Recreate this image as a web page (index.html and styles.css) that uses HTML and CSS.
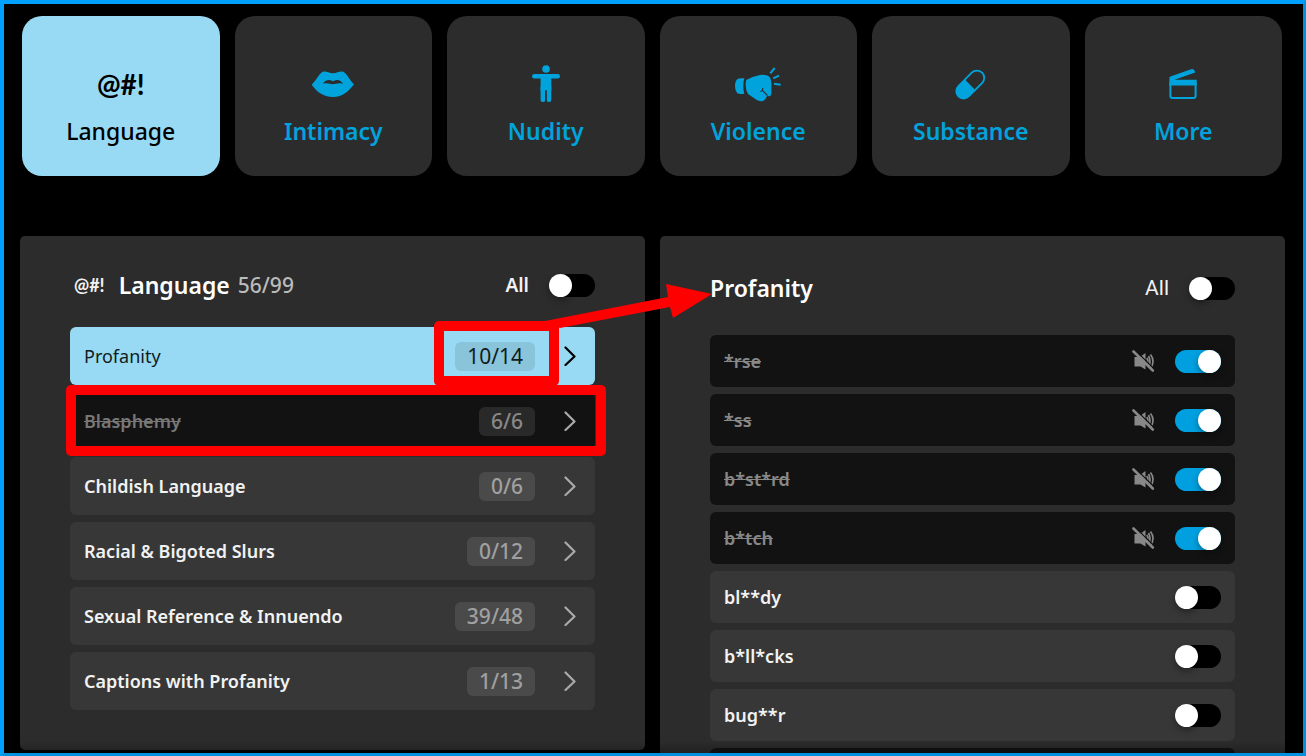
FILE: index.html
```html
<!DOCTYPE html>
<html lang="en">
<head>
<meta charset="utf-8">
<meta name="viewport" content="width=device-width, initial-scale=1">
<title>Language filters</title>
<link rel="stylesheet" href="styles.css">
</head>
<body>
<svg class="defs" aria-hidden="true">
  <symbol id="chevron" viewBox="0 0 12 20"><path d="M1.500 1.500L10.500 10.500L1.500 19" fill="none" stroke="currentColor" stroke-width="2.200" stroke-linecap="round" stroke-linejoin="round"/></symbol>
  <symbol id="mute" viewBox="0 0 24 24">
    <path d="M2.500 8H8L13.500 4V20.500L8.500 17.500H2.500Z" fill="currentColor"/>
    <path d="M14.800 9Q17 12.500 14.800 16.500M16.500 7Q19.500 12.500 16.500 18.500M18.500 5.500Q23.500 12 18.500 20" fill="none" stroke="currentColor" stroke-width="1.700"/>
    <path d="M3 1.200L23 20.700" stroke="#121212" stroke-width="1.200"/>
    <path d="M1.500 2.500L20.800 21.500" stroke="currentColor" stroke-width="2.600" stroke-linecap="round"/>
  </symbol>
</svg>
<main class="frame">
  <nav class="tiles" aria-label="Filter categories">
    <button class="tile tile-active" type="button"><span class="tile-icon symbols">@#!</span><span class="tile-label">Language</span></button>
    <button class="tile" type="button">
      <span class="tile-icon"><svg width="44" height="27" viewBox="0 0 44 27" aria-hidden="true"><path fill="currentColor" fill-rule="evenodd" d="M.7 13.700C5 10 9 1 12.500.6C15.500 0 18 2.200 22 2.200S28.500 0 31.500.6C35 1 39 10 43 13.300C38 20 32 26 22 26S5 20 .7 13.700ZM11.500 12.900C14 10 16 9 18 9C20 9 21 10.200 22 10.200S24 9 26 9C29 9 31 11 32 12.900C27 11.500 25 13.200 22 13.200S16 11.500 11.500 12.900Z"/></svg></span>
      <span class="tile-label">Intimacy</span></button>
    <button class="tile" type="button">
      <span class="tile-icon"><svg width="28" height="38" viewBox="0 0 28 38" aria-hidden="true"><g fill="currentColor"><circle cx="14" cy="4" r="3.800"/><rect y="9" width="28" height="4.600" rx="2.300"/><path d="M8.600 9H19.300V26H8.600Z"/><rect x="8.600" y="20" width="4.700" height="17" rx="2"/><rect x="14.600" y="20" width="4.700" height="17" rx="2"/></g><path d="M13.950 25V36" stroke="#2c2c2c" stroke-width="1.300"/></svg></span>
      <span class="tile-label">Nudity</span></button>
    <button class="tile" type="button">
      <span class="tile-icon"><svg width="48" height="33" viewBox="0 1 48 33" overflow="visible" aria-hidden="true"><g fill="currentColor"><path d="M10.300 11.300Q8.200 19 10.300 26.700Q5 27.200 3.300 26.300Q1 24 1 19.300Q1 14 3.500 12Q5 11 10.300 11.300Z"/><path d="M12.200 13Q18 9.500 26 8Q33 7 36 10.500Q37.500 13 37.400 18V26Q37.300 29 35 29.300L33 29Q32 32.500 29 34Q25.500 35 22 32.500L14 27Q10.500 21 12.200 13Z"/></g><path d="M28.800 21L28.600 23.600L33.500 28.500M28.800 23.500L26.500 24.500" fill="none" stroke="#2c2c2c" stroke-width="1.100"/><path d="M36.300 6.300L40.700 1M39.300 11.300L45 8.700M40 16.700L46.700 17.700" stroke="currentColor" stroke-width="2"/></svg></span>
      <span class="tile-label">Violence</span></button>
    <button class="tile" type="button">
      <span class="tile-icon"><svg width="31" height="31" viewBox="0 0 31 31" aria-hidden="true"><g transform="rotate(-45 15.200 15.600)"><rect x="-1.500" y="8.300" width="33.500" height="14.600" rx="7.300" fill="none" stroke="currentColor" stroke-width="1.800"/><path d="M15 8.300H5.800A7.300 7.300 0 0 0 5.800 22.900H15Z" fill="currentColor"/></g></svg></span>
      <span class="tile-label">Substance</span></button>
    <button class="tile" type="button">
      <span class="tile-icon"><svg width="28" height="32" viewBox="0 0 28 32" aria-hidden="true"><path d="M.4 14V10Q.4 8.800 1.500 8.400L22 1.200Q24.500.2 25.500 2.500L26.200 4.600L5.500 11.800H27.600V17.500H.4Z" fill="currentColor"/><rect x="1.400" y="13" width="25.200" height="17" rx="2" fill="none" stroke="currentColor" stroke-width="2"/></svg></span>
      <span class="tile-label">More</span></button>
  </nav>

  <div class="panels">
    <section class="panel" aria-labelledby="language-title">
      <header class="panel-head">
        <span class="symbols symbols-small">@#!</span>
        <h2 class="panel-title" id="language-title">Language</h2>
        <span class="total">56/99</span>
        <label class="all all-strong">All<input class="toggle" type="checkbox" role="switch"></label>
      </header>
      <ul class="groups">
        <li class="group-item">
          <button class="group group-active" type="button"><span class="group-name">Profanity</span><span class="count">10/14</span><svg class="chevron" aria-hidden="true"><use href="#chevron"/></svg></button>
          <span class="mark mark-count"></span>
          <svg class="mark-arrow" viewBox="0 0 175 46" aria-hidden="true"><path d="M5 41L128 17L126 4L172 14L133 38L130 27L20 48Z" fill="#f00"/></svg>
        </li>
        <li class="group-item">
          <button class="group group-off" type="button"><s class="group-name">Blasphemy</s><span class="count">6/6</span><svg class="chevron" aria-hidden="true"><use href="#chevron"/></svg></button>
          <span class="mark mark-row"></span>
        </li>
        <li class="group-item"><button class="group" type="button"><span class="group-name">Childish Language</span><span class="count">0/6</span><svg class="chevron" aria-hidden="true"><use href="#chevron"/></svg></button></li>
        <li class="group-item"><button class="group" type="button"><span class="group-name">Racial &amp; Bigoted Slurs</span><span class="count">0/12</span><svg class="chevron" aria-hidden="true"><use href="#chevron"/></svg></button></li>
        <li class="group-item"><button class="group" type="button"><span class="group-name">Sexual Reference &amp; Innuendo</span><span class="count">39/48</span><svg class="chevron" aria-hidden="true"><use href="#chevron"/></svg></button></li>
        <li class="group-item"><button class="group" type="button"><span class="group-name">Captions with Profanity</span><span class="count">1/13</span><svg class="chevron" aria-hidden="true"><use href="#chevron"/></svg></button></li>
      </ul>
    </section>

    <section class="panel" aria-labelledby="profanity-title">
      <header class="panel-head panel-head-words">
        <h2 class="panel-title" id="profanity-title">Profanity</h2>
        <label class="all all-light">All<input class="toggle" type="checkbox" role="switch"></label>
      </header>
      <ul class="words">
        <li><label class="word word-off"><s class="word-name">*rse</s><svg class="mute" aria-hidden="true"><use href="#mute"/></svg><input class="toggle" type="checkbox" role="switch" checked></label></li>
        <li><label class="word word-off"><s class="word-name">*ss</s><svg class="mute" aria-hidden="true"><use href="#mute"/></svg><input class="toggle" type="checkbox" role="switch" checked></label></li>
        <li><label class="word word-off"><s class="word-name">b*st*rd</s><svg class="mute" aria-hidden="true"><use href="#mute"/></svg><input class="toggle" type="checkbox" role="switch" checked></label></li>
        <li><label class="word word-off"><s class="word-name">b*tch</s><svg class="mute" aria-hidden="true"><use href="#mute"/></svg><input class="toggle" type="checkbox" role="switch" checked></label></li>
        <li><label class="word"><span class="word-name">bl**dy</span><input class="toggle" type="checkbox" role="switch"></label></li>
        <li><label class="word"><span class="word-name">b*ll*cks</span><input class="toggle" type="checkbox" role="switch"></label></li>
        <li><label class="word"><span class="word-name">bug**r</span><input class="toggle" type="checkbox" role="switch"></label></li>
        <li class="word word-off"></li>
      </ul>
    </section>
  </div>
</main>
</body>
</html>
```
FILE: styles.css
```css
* { box-sizing: border-box; }
body { margin: 0; background: #000; color: #f2f2f2; font-family: "Noto Sans", "Open Sans", sans-serif; }
button { border: 0; margin: 0; color: inherit; font: inherit; cursor: pointer; }
ul { list-style: none; margin: 0; padding: 0; }
.defs { position: absolute; width: 0; height: 0; }

.frame {
  position: relative;
  height: 100vh;
  overflow: hidden;
  border-style: solid;
  border-width: 4px 3px 3px 4px;
  border-color: #00a0ff #0090e0 #0090e0 #00a0ff;
}
.frame::after {
  content: "";
  position: absolute;
  inset: auto 0 0;
  height: 12px;
  background: linear-gradient(transparent, rgba(0, 0, 0, .25));
  pointer-events: none;
}

.tiles { display: grid; grid-template-columns: repeat(6, 1fr); gap: 15px; padding: 12px 21px 0 18px; }
.tile {
  display: flex;
  flex-direction: column;
  align-items: center;
  gap: 13px;
  height: 160px;
  padding: 48px 8px 0;
  border-radius: 20px;
  background: #2c2c2c;
  color: #00a3dc;
}
.tile-icon { display: flex; align-items: center; justify-content: center; height: 40px; }
.tile-label { font-size: 23px; line-height: 28px; font-weight: 600; }
.tile-active { background: #98daf3; color: #000; }
.tile-active .tile-label { font-weight: 500; }
.symbols { font-family: Lato, sans-serif; font-size: 28px; font-weight: 700; }
.symbols-small { font-size: 18px; line-height: 24px; }

.panels { display: grid; grid-template-columns: 1fr 1fr; align-items: start; gap: 15px; padding: 60px 18px 0 16px; }
.panel { padding: 35px 50px 40px; border-radius: 5px; background: #2c2c2c; }
.panel-head { display: flex; align-items: center; height: 28px; margin-bottom: 28px; padding-left: 4px; }
.panel-head-words { height: 34px; margin-bottom: 30px; padding-left: 0; }
.panel-title { margin: 0; font-size: 23px; line-height: 28px; font-weight: 600; color: #fff; }
.symbols-small + .panel-title { margin-left: 14px; }
.total { margin-left: 8px; font-size: 21px; line-height: 28px; font-weight: 500; color: #bbb; }
.all { display: flex; align-items: center; gap: 20px; margin-left: auto; }
.all-strong { font-size: 19px; line-height: 28px; font-weight: 600; }
.all-light { font-family: Roboto, sans-serif; font-size: 21px; line-height: 28px; }

.toggle {
  appearance: none;
  flex: none;
  display: flex;
  width: 46px;
  height: 23px;
  margin: 0;
  border-radius: 12px;
  background: #000;
  cursor: pointer;
}
.toggle::before {
  content: "";
  width: 23px;
  height: 23px;
  border-radius: 50%;
  background: #fff;
  box-shadow: 0 3px 6px rgba(0, 0, 0, .35);
}
.toggle:checked { justify-content: flex-end; background: #00a0e0; }

.groups { display: grid; gap: 7px; }
.group-item { position: relative; }
.group {
  display: flex;
  align-items: center;
  width: 100%;
  height: 58px;
  padding: 0 19px 0 14px;
  border-radius: 6px;
  background: #373737;
  text-align: left;
  font-size: 18px;
  font-weight: 600;
}
.group-name { flex: 1; }
.group-off { background: #121212; color: #777; }
.group-active { background: #98daf3; color: #111c20; font-weight: 400; }
.count {
  padding: 0 12px;
  border-radius: 6px;
  background: #4a4a4a;
  color: #a0a0a0;
  font-size: 21px;
  line-height: 29px;
  font-weight: 500;
}
.group-off .count { background: #292929; color: #888; }
.group-active .count { background: #89c4da; color: #111c20; font-weight: 400; }
.chevron { flex: none; width: 12px; height: 20px; margin-left: 29px; color: #aaa; }
.group-active .chevron { color: #000; }

.mark { position: absolute; z-index: 2; border: 10px solid #f00; border-radius: 5px; pointer-events: none; }
.mark-count { top: -6px; right: 36px; width: 125px; height: 65px; }
.mark-row { inset: -7px -11px -6px -4px; }
.mark-arrow { position: absolute; z-index: 2; top: -47px; right: -120px; width: 175px; height: 46px; overflow: visible; pointer-events: none; }

.words { display: grid; gap: 7px; }
.word {
  display: flex;
  align-items: center;
  height: 52px;
  padding: 0 14px;
  border-radius: 6px;
  background: #373737;
  font-size: 18px;
  font-weight: 600;
}
.word-off { background: #121212; color: #888; }
.word-name { flex: 1; }
.mute { width: 24px; height: 24px; margin-right: 19px; }
```
